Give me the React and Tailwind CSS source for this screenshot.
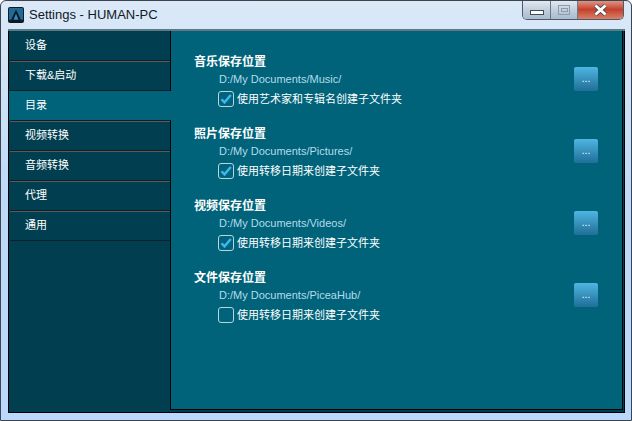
const FONT = { fontFamily: '"Liberation Sans", "Noto Sans CJK SC", sans-serif' };

const navItems = ['设备', '下载&启动', '目录', '视频转换', '音频转换', '代理', '通用'];

const sections = [
    { title: '音乐保存位置', path: 'D:/My Documents/Music/', label: '使用艺术家和专辑名创建子文件夹', checked: true },
    { title: '照片保存位置', path: 'D:/My Documents/Pictures/', label: '使用转移日期来创建子文件夹', checked: true },
    { title: '视频保存位置', path: 'D:/My Documents/Videos/', label: '使用转移日期来创建子文件夹', checked: true },
    { title: '文件保存位置', path: 'D:/My Documents/PiceaHub/', label: '使用转移日期来创建子文件夹', checked: false },
];

const Section = ({ title, path, label, checked }) => (
    <div className="relative h-[72px]">
        <div className="h-[18px] pt-[1px] pl-[23px] text-[12px] leading-[18px] font-bold text-white">{title}</div>
        <div className="h-[18px] pl-[48px] text-[11px] leading-[18px] text-[#b4dcea]">{path}</div>
        <div className="flex h-[22px] items-center gap-[3px] pl-[47px] text-[11px] text-white">
            <span className="flex h-[16px] w-[16px] items-center justify-center rounded-[3px] border border-[#b9d6e0] bg-[#00637a]">
                {checked && (
                    <svg width="14" height="14" viewBox="0 0 14 14" fill="none">
                        <path d="M2.5 7.2 L5.5 10.4 L11.8 3" stroke="#3fb6ee" strokeWidth="2.4" />
                    </svg>
                )}
            </span>
            {label}
        </div>
        <button className="absolute top-[15px] left-[403px] flex h-[24px] w-[24px] items-center justify-center rounded-[2px] bg-gradient-to-b from-[#4fb6e2] to-[#1f6f97] text-[10px] leading-none text-white">
            ...
        </button>
    </div>
);

export default function App() {
    return (
        <div style={FONT} className="flex h-[421px] w-[632px] flex-col overflow-hidden rounded-t-[6px] border border-[#3c4450] bg-gradient-to-b from-[#dbe9f7] via-[#bcd9f8] to-[#b9d8fb] px-[6px] pb-[7px]">
            <div className="relative flex h-[28px] flex-none items-center gap-[5px] pl-[1px]">
                <svg width="16" height="16" viewBox="0 0 16 16">
                    <rect width="16" height="16" rx="2" fill="#101820" />
                    <rect x="1" y="1" width="14" height="12" rx="1" fill="#1f6a97" />
                    <path d="M8 2.5 L13 13 H10.6 L8 7 L5.4 13 H3 Z" fill="#0d1a26" />
                    <path d="M8 7 L10 12 H6 Z" fill="#2f8fc4" />
                </svg>
                <span className="text-[13px] text-[#111827]">Settings - HUMAN-PC</span>
                <div className="absolute top-[-1px] right-[1px] flex h-[20px] overflow-hidden rounded-b-[5px] border border-t-0 border-[#4d5a69]">
                    <div className="flex w-[28px] items-end justify-center border-r border-[#6d7887] bg-gradient-to-b from-[#e4ecf5] via-[#c3d0de] to-[#a9bbce] pb-[4px]">
                        <div className="h-[5px] w-[14px] border border-[#3f4a5a] bg-white" />
                    </div>
                    <div className="flex w-[27px] items-center justify-center border-r border-[#6d7887] bg-gradient-to-b from-[#e4ecf5] via-[#c3d0de] to-[#a9bbce]">
                        <div className="flex h-[10px] w-[12px] items-center justify-center border border-[#8e9cae]">
                            <div className="h-[4px] w-[7px] border border-[#8e9cae]" />
                        </div>
                    </div>
                    <div className="flex w-[45px] items-center justify-center bg-gradient-to-b from-[#dd9d8f] via-[#c4402a] to-[#d87f68]">
                        <svg width="15" height="12" viewBox="0 0 15 12">
                            <path d="M2.5 1.5 L12.5 10.5 M12.5 1.5 L2.5 10.5" stroke="#4a4a4a" strokeWidth="4.4" />
                            <path d="M2.5 1.5 L12.5 10.5 M12.5 1.5 L2.5 10.5" stroke="#ffffff" strokeWidth="2.8" />
                        </svg>
                    </div>
                </div>
            </div>
            <div className="ml-[1px] flex min-h-0 flex-1 border-t-2 border-[#5d7b86] bg-[#013f50]">
                <div className="flex flex-1 border-x border-b border-black pr-[1px] pb-[1px]">
                    <nav className="flex w-[162px] flex-none flex-col">
                        {navItems.map((item, i) => (
                            <div
                                key={item}
                                className={
                                    item === '目录'
                                        ? 'flex h-[30px] flex-none flex-col bg-[#00637a] pl-[1px]'
                                        : 'flex h-[30px] flex-none flex-col border-r border-black pl-[1px]'
                                }
                            >
                                <div className="flex-1 pl-[15px] text-[11px] leading-[29px] text-white">{item}</div>
                                {i === navItems.length - 1 ? (
                                    <div className="h-[1px] bg-[#0d2029]" />
                                ) : (
                                    <>
                                        <div className="h-[1px] bg-[#0d2029]" />
                                        <div className="h-[1px] bg-[#5a5a5a]" />
                                    </>
                                )}
                            </div>
                        ))}
                        <div className="mb-[1px] flex-1 border-r border-black" />
                    </nav>
                    <main className="mb-[1px] flex-1 border-r border-b border-black bg-[#00637a] pt-[21px]">
                        {sections.map((section) => (
                            <Section key={section.title} {...section} />
                        ))}
                    </main>
                </div>
            </div>
        </div>
    );
}
